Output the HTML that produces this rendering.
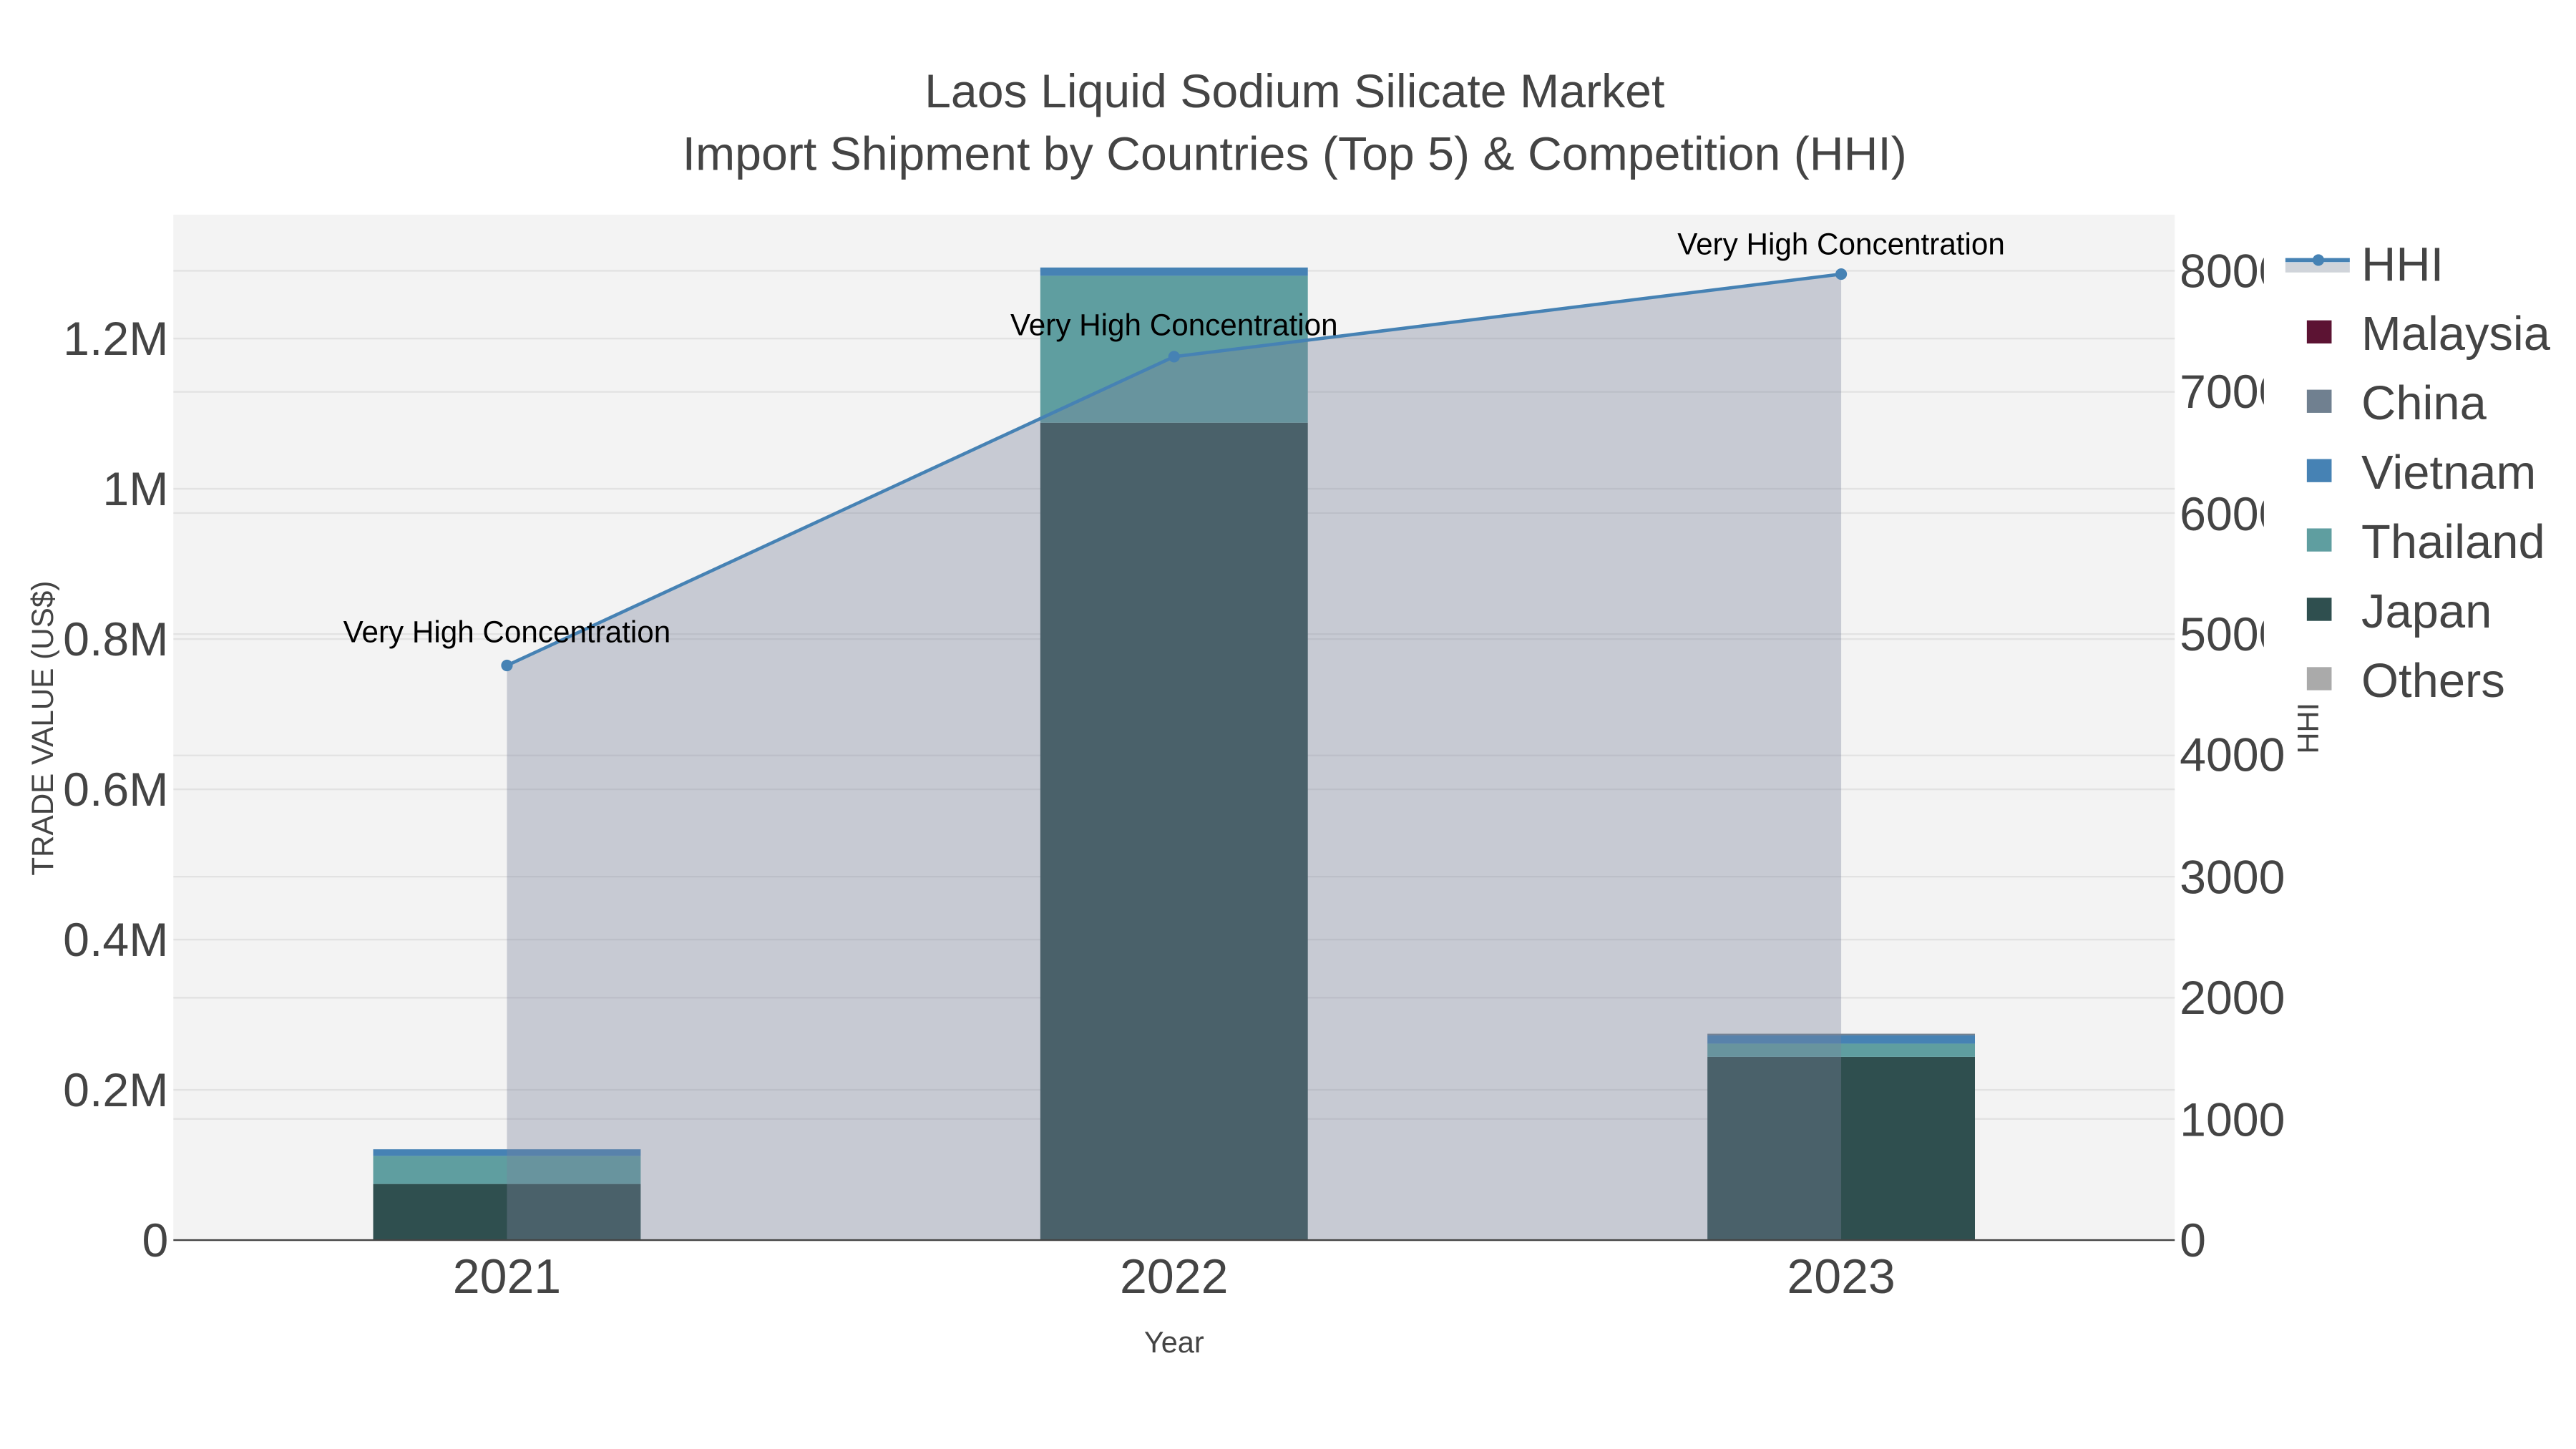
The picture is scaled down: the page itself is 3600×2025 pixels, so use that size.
<!DOCTYPE html><html><head><style>html,body{margin:0;padding:0;background:#fff;overflow:hidden}svg{display:block}text{font-family:"Liberation Sans",Arial,sans-serif}</style></head><body>
<svg width="3600" height="2025" viewBox="0 0 1560 877.5" xmlns="http://www.w3.org/2000/svg">
<rect width="1560" height="877.5" fill="#fff"/>
<rect x="105" y="130" width="1212" height="621" fill="#f3f3f3"/>
<g stroke="#e2e2e2" stroke-width="1">
<line x1="105" x2="1317" y1="660" y2="660"/><line x1="105" x2="1317" y1="569" y2="569"/><line x1="105" x2="1317" y1="478" y2="478"/><line x1="105" x2="1317" y1="387" y2="387"/><line x1="105" x2="1317" y1="296" y2="296"/><line x1="105" x2="1317" y1="205" y2="205"/>
<line x1="105" x2="1317" y1="677.6" y2="677.6"/><line x1="105" x2="1317" y1="604.2" y2="604.2"/><line x1="105" x2="1317" y1="530.9" y2="530.9"/><line x1="105" x2="1317" y1="457.5" y2="457.5"/><line x1="105" x2="1317" y1="384" y2="384"/><line x1="105" x2="1317" y1="310.7" y2="310.7"/><line x1="105" x2="1317" y1="237.3" y2="237.3"/><line x1="105" x2="1317" y1="164" y2="164"/>
</g>
<rect x="226" y="717" width="162" height="34" fill="#2f4f4f"/><rect x="226" y="700" width="162" height="17" fill="#5f9ea0"/><rect x="226" y="696" width="162" height="4" fill="#4682b4"/>
<rect x="630" y="256" width="162" height="495" fill="#2f4f4f"/><rect x="630" y="167" width="162" height="89" fill="#5f9ea0"/><rect x="630" y="162" width="162" height="5" fill="#4682b4"/>
<rect x="1034" y="640" width="162" height="111" fill="#2f4f4f"/><rect x="1034" y="632" width="162" height="8" fill="#5f9ea0"/><rect x="1034" y="627" width="162" height="5" fill="#4682b4"/><rect x="1034" y="626" width="162" height="1" fill="#708090"/>
<polygon points="307,403 711,216 1115,166 1115,751 307,751" fill="rgb(123,131,154)" fill-opacity="0.36"/>
<polyline points="307,403 711,216 1115,166" fill="none" stroke="#4682b4" stroke-width="2"/>
<circle cx="307" cy="403" r="3.5" fill="#4682b4"/><circle cx="711" cy="216" r="3.5" fill="#4682b4"/><circle cx="1115" cy="166" r="3.5" fill="#4682b4"/>
<line x1="105" x2="1317" y1="751" y2="751" stroke="#444" stroke-width="1"/>
<g font-size="18.3" fill="#000" text-anchor="middle">
<text x="307" y="389">Very High Concentration</text><text x="711" y="203">Very High Concentration</text><text x="1115" y="154">Very High Concentration</text>
</g>
<g font-size="28.7" fill="#444" text-anchor="end">
<text x="102" y="761">0</text><text x="102" y="670">0.2M</text><text x="102" y="579">0.4M</text><text x="102" y="488">0.6M</text><text x="102" y="397">0.8M</text><text x="102" y="306">1M</text><text x="102" y="215">1.2M</text>
</g>
<g font-size="28.7" fill="#444">
<text x="1320" y="761">0</text><text x="1320" y="688">1000</text><text x="1320" y="614">2000</text><text x="1320" y="541">3000</text><text x="1320" y="467">4000</text><text x="1320" y="394">5000</text><text x="1320" y="321">6000</text><text x="1320" y="247">7000</text><text x="1320" y="174">8000</text>
</g>
<g font-size="29.5" fill="#444" text-anchor="middle"><text x="307" y="783">2021</text><text x="711" y="783">2022</text><text x="1115" y="783">2023</text></g>
<text x="711" y="819" font-size="18" fill="#444" text-anchor="middle">Year</text>
<text transform="translate(32,441) rotate(-90)" font-size="18.3" fill="#444" text-anchor="middle">TRADE VALUE (US$)</text>
<g font-size="28.7" fill="#444" text-anchor="middle"><text x="784" y="65">Laos Liquid Sodium Silicate Market</text><text x="784" y="103">Import Shipment by Countries (Top 5) &amp; Competition (HHI)</text></g>
<rect x="1371" y="140" width="189" height="290" fill="#fff"/>
<text transform="translate(1404,441) rotate(-90)" font-size="18" fill="#444" text-anchor="middle">HHI</text>
<rect x="1384" y="159" width="39" height="6" fill="#d0d4da"/>
<line x1="1384" x2="1423" y1="157.5" y2="157.5" stroke="#4682b4" stroke-width="2.5"/><circle cx="1404" cy="157.5" r="3.5" fill="#4682b4"/>
<g font-size="29" fill="#444">
<text x="1430" y="170">HHI</text><text x="1430" y="212">Malaysia</text><text x="1430" y="254">China</text><text x="1430" y="296">Vietnam</text><text x="1430" y="338">Thailand</text><text x="1430" y="380">Japan</text><text x="1430" y="422">Others</text>
</g>
<rect x="1397" y="194" width="15" height="14" fill="#5c1333"/>
<rect x="1397" y="236" width="15" height="14" fill="#708090"/>
<rect x="1397" y="278" width="15" height="14" fill="#4682b4"/>
<rect x="1397" y="320" width="15" height="14" fill="#5f9ea0"/>
<rect x="1397" y="362" width="15" height="14" fill="#2f4f4f"/>
<rect x="1397" y="404" width="15" height="14" fill="#aaaaaa"/>
</svg></body></html>
